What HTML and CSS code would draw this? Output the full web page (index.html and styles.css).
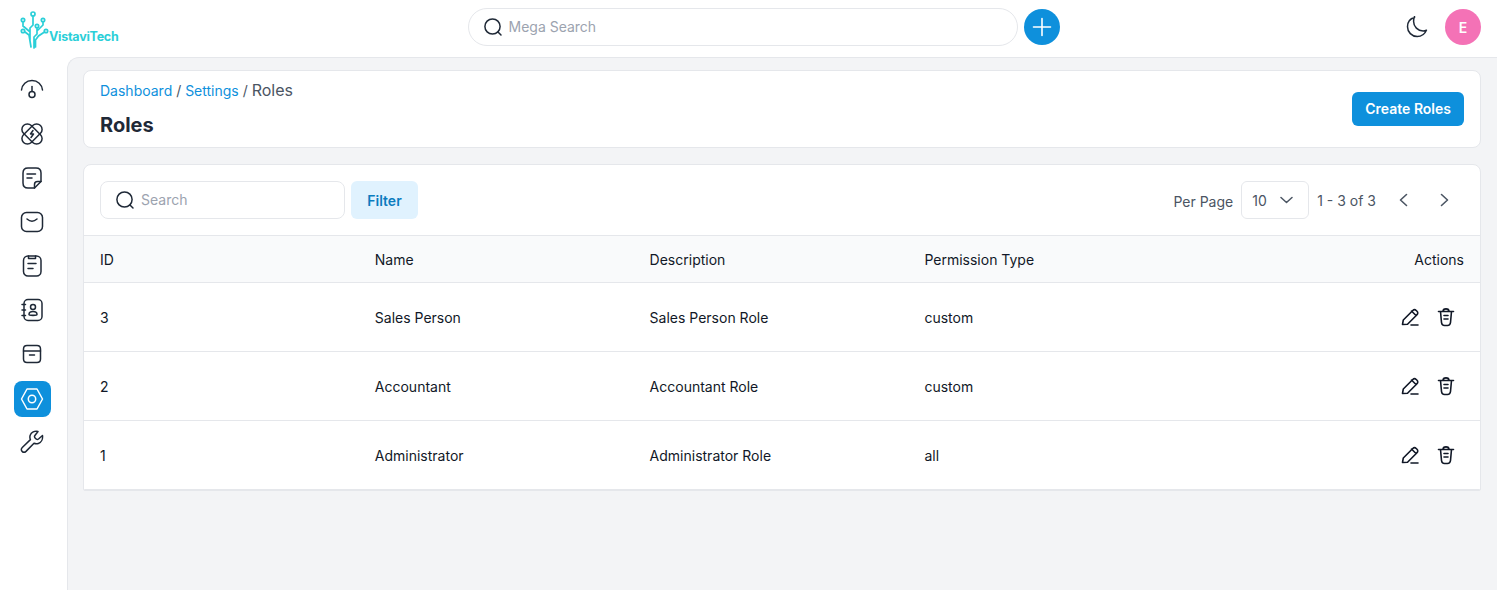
FILE: index.html
```html
<!DOCTYPE html>
<html lang="en">
<head>
<meta charset="utf-8">
<title>Roles</title>
<link rel="stylesheet" href="styles.css">
</head>
<body>
<header class="topbar">
  <div class="logo">
    <svg class="logo-mark" width="32" height="38" viewBox="0 0 32 38" fill="none" stroke="#2bcfd8" stroke-width="1.700" stroke-linecap="round">
      <circle cx="13" cy="3" r="2"/><circle cx="3" cy="9" r="1.700"/><circle cx="23" cy="9" r="1.700"/><circle cx="3" cy="20" r="1.700"/><circle cx="26" cy="20" r="1.700"/><circle cx="17" cy="15" r="1.700"/>
      <path d="M13 5v9l-3 3v13M3 11v4l6 5M5 21l4 3 1 6 1 6M17 17v6l-3 3v11M23 11v3l-5 5M24.500 21l-6 4-3 4v7"/>
    </svg>
    <span class="logo-text">VistaviTech</span>
  </div>
  <div class="mega">
    <label class="mega-field">
      <svg width="20" height="20" viewBox="0 0 20 20" fill="none" stroke="#1f2937" stroke-width="1.500" stroke-linecap="round"><circle cx="9.500" cy="9.500" r="7.600"/><path d="M15 15l3 3"/></svg>
      <span class="mega-placeholder">Mega Search</span>
    </label>
    <button class="plus" type="button" aria-label="Add">
      <svg width="20" height="20" viewBox="0 0 20 20" fill="none" stroke="#fff" stroke-width="1.600" stroke-linecap="round"><path d="M10 1.500v17M1.500 10h17"/></svg>
    </button>
  </div>
  <div class="top-right">
    <svg class="moon" width="22" height="22" viewBox="0 0 22 22" fill="none" stroke="#1f2937" stroke-width="1.500" stroke-linejoin="round"><path d="M8.500 1.500C4.200 2.600 1.500 6.400 1.500 10.800c0 5.300 4.300 9.700 9.700 9.700 4 0 7.600-2.400 9.200-6.200-1 .4-2.100.6-3.300.6-5.300 0-9.500-4.300-9.500-9.500 0-1.800.2-3.200.9-4.900z"/></svg>
    <div class="avatar">E</div>
  </div>
</header>

<div class="shell">
  <nav class="sidebar">
    <a class="nav-item"><svg viewBox="0 0 24 24"><path d="M1.500 12C2 6.500 6.300 2.500 12 2.500S22 6.500 22.500 12"/><path d="M12 8.500v5"/><circle cx="12" cy="16.500" r="3"/></svg></a>
    <a class="nav-item"><svg viewBox="0 0 24 24"><rect x="0" y="6.500" width="24" height="11" rx="5.500" transform="rotate(45 12 12)"/><rect x="0" y="6.500" width="24" height="11" rx="5.500" transform="rotate(-45 12 12)"/><path d="M13 8.500l-2.500 3.500h3L11 15.500"/></svg></a>
    <a class="nav-item"><svg viewBox="0 0 24 24"><path d="M14.500 22H8c-3 0-5-2-5-5V7c0-3 2-5 5-5h8c3 0 5 2 5 5v8.500z"/><path d="M21 15.500h-3.500c-2 0-3 1-3 3V22"/><path d="M7 8h8.500M7 12h5"/></svg></a>
    <a class="nav-item"><svg viewBox="0 0 24 24"><rect x="1.500" y="2.500" width="21" height="19" rx="5"/><path d="M7 9c3 2.600 7 2.600 10 0"/></svg></a>
    <a class="nav-item"><svg viewBox="0 0 24 24"><rect x="3.500" y="2" width="17.500" height="20" rx="4.500"/><path d="M8.500 2v2.500h7V2M8 9.500h8M8 14.500h5"/></svg></a>
    <a class="nav-item"><svg viewBox="0 0 24 24"><rect x="4" y="1.500" width="18" height="21" rx="4"/><path d="M2 6.500h3.500M2 12h3.500M2 17.500h3.500"/><circle cx="13" cy="9" r="2.500"/><path d="M9 16.500c0-1.800 1.800-3 4-3s4 1.200 4 3c0 1.200-8 1.200-8 0z"/></svg></a>
    <a class="nav-item"><svg viewBox="0 0 24 24"><path d="M7 3.500h10c2 0 3.500 1.500 3.500 3.500v10c0 2-1.500 3.500-3.500 3.500H7c-2 0-3.500-1.500-3.500-3.500V7c0-2 1.500-3.500 3.500-3.500z"/><path d="M3.500 9h17M9.500 13h5"/></svg></a>
    <a class="nav-item active"><svg viewBox="0 0 24 24"><path d="M7 2h10l5.500 10L17 22H7L1.500 12z"/><circle cx="12" cy="12" r="3.700"/></svg></a>
    <a class="nav-item"><svg viewBox="0 0 24 24"><path d="M22.500 5.500L18.500 9c-1 .7-2.200.3-3-.5-.9-.9-1.300-2.100-.6-3L18 1.500c-3.500-.8-6.800.9-7.800 3.800-.5 1.500-.4 3 .2 4.300L2.300 17.500c-1.300 1.300-1.300 2.800-.2 3.900 1.200 1.200 2.700 1.100 3.900 0l8-8.100c1.300.6 2.800.7 4.300.2 3-1 4.700-4.400 4.200-8z"/></svg></a>
  </nav>

  <main class="content">
    <section class="card page-head">
      <div>
        <div class="crumbs"><span class="crumb-link">Dashboard</span> <span class="crumb-sep">/</span> <span class="crumb-link">Settings</span> <span class="crumb-sep">/</span> <span class="crumb-now">Roles</span></div>
        <h1>Roles</h1>
      </div>
      <button class="primary" type="button">Create Roles</button>
    </section>

    <section class="card list">
      <div class="toolbar">
        <label class="search">
          <svg width="20" height="20" viewBox="0 0 20 20" fill="none" stroke="#1f2937" stroke-width="1.500" stroke-linecap="round"><circle cx="9.500" cy="9.500" r="7.600"/><path d="M15 15l3 3"/></svg>
          <span class="search-placeholder">Search</span>
        </label>
        <button class="filter" type="button">Filter</button>
        <div class="pager">
          <span class="per-page">Per Page</span>
          <div class="select"><span>10</span>
            <svg width="13" height="8" viewBox="0 0 13 8" fill="none" stroke="#4b5563" stroke-width="1.500" stroke-linecap="round" stroke-linejoin="round"><path d="M1 1.500l5.500 5 5.500-5"/></svg>
          </div>
          <span class="range">1 - 3 of 3</span>
          <button class="page-btn" type="button" aria-label="Previous"><svg width="9" height="14" viewBox="0 0 9 14" fill="none" stroke="#4b5563" stroke-width="1.600" stroke-linecap="round" stroke-linejoin="round"><path d="M7.500 1.500L1.500 7l6 5.500"/></svg></button>
          <button class="page-btn" type="button" aria-label="Next"><svg width="9" height="14" viewBox="0 0 9 14" fill="none" stroke="#4b5563" stroke-width="1.600" stroke-linecap="round" stroke-linejoin="round"><path d="M1.500 1.500L7.500 7l-6 5.500"/></svg></button>
        </div>
      </div>
      <table>
        <thead>
          <tr><th>ID</th><th>Name</th><th>Description</th><th>Permission Type</th><th class="right">Actions</th></tr>
        </thead>
        <tbody>
          <tr><td>3</td><td>Sales Person</td><td>Sales Person Role</td><td>custom</td>
            <td class="right"><span class="actions">
              <svg width="20" height="20" viewBox="0 0 20 20" class="act"><path d="M11.500 4l4.500 4.500M2.500 17.500l.8-4.500 9.500-9.500c1-1 2.400-1 3.400 0l.8.800c1 1 1 2.400 0 3.400l-9.500 9.500zM11 18h7"/></svg>
              <svg width="20" height="20" viewBox="0 0 20 20" class="act"><path d="M2.500 4.500h15M7 4.500c0-3.500 6-3.500 6 0M4.500 4.500l1 11c.2 1.800 1.200 3 3 3h3c1.800 0 2.800-1.200 3-3l1-11M8 8.500h4M8 12h4"/></svg>
            </span></td></tr>
          <tr><td>2</td><td>Accountant</td><td>Accountant Role</td><td>custom</td>
            <td class="right"><span class="actions">
              <svg width="20" height="20" viewBox="0 0 20 20" class="act"><path d="M11.500 4l4.500 4.500M2.500 17.500l.8-4.500 9.500-9.500c1-1 2.400-1 3.400 0l.8.800c1 1 1 2.400 0 3.400l-9.500 9.500zM11 18h7"/></svg>
              <svg width="20" height="20" viewBox="0 0 20 20" class="act"><path d="M2.500 4.500h15M7 4.500c0-3.500 6-3.500 6 0M4.500 4.500l1 11c.2 1.800 1.200 3 3 3h3c1.800 0 2.800-1.200 3-3l1-11M8 8.500h4M8 12h4"/></svg>
            </span></td></tr>
          <tr><td>1</td><td>Administrator</td><td>Administrator Role</td><td>all</td>
            <td class="right"><span class="actions">
              <svg width="20" height="20" viewBox="0 0 20 20" class="act"><path d="M11.500 4l4.500 4.500M2.500 17.500l.8-4.500 9.500-9.500c1-1 2.400-1 3.400 0l.8.800c1 1 1 2.400 0 3.400l-9.500 9.500zM11 18h7"/></svg>
              <svg width="20" height="20" viewBox="0 0 20 20" class="act"><path d="M2.500 4.500h15M7 4.500c0-3.500 6-3.500 6 0M4.500 4.500l1 11c.2 1.800 1.200 3 3 3h3c1.800 0 2.800-1.200 3-3l1-11M8 8.500h4M8 12h4"/></svg>
            </span></td></tr>
        </tbody>
      </table>
    </section>
  </main>
</div>
</body>
</html>
```
FILE: styles.css
```css
* { box-sizing: border-box; }
html, body { margin: 0; height: 100%; overflow: hidden; }
body { background: #fff; font-family: Inter, "Liberation Sans", sans-serif; font-size: 14px; color: #111827; display: flex; flex-direction: column; }
button { font-family: inherit; border: 0; cursor: pointer; }

.topbar { height: 57px; flex: none; display: grid; grid-template-columns: 1fr 592px 1fr; align-items: center; padding: 0 16px 3px 20px; }
.logo { display: flex; align-items: flex-start; height: 38px; position: relative; top: 3px; }
.logo-mark { flex: none; margin-right: -3px; }
.logo-text { font-size: 12.500px; font-weight: 700; color: #2bcfd8; letter-spacing: -.25px; line-height: 15px; margin-top: 18px; }
.mega { display: flex; align-items: center; gap: 6px; transform: translateX(13px); }
.mega-field { width: 550px; height: 38px; border: 1px solid #e5e7eb; border-radius: 19px; display: flex; align-items: center; padding-left: 14px; gap: 6px; }
.mega-placeholder { color: #9ca3af; font-size: 14px; padding-bottom: 2px; }
.plus { width: 36px; height: 36px; border-radius: 50%; background: #0e90dc; display: flex; align-items: center; justify-content: center; padding: 0; }
.top-right { display: flex; justify-content: flex-end; align-items: center; gap: 17px; }
.avatar { width: 36px; height: 36px; border-radius: 50%; background: #f472b6; color: #fff; font-weight: 600; font-size: 14px; display: flex; align-items: center; justify-content: center; }

.shell { flex: 1; display: flex; min-height: 0; }
.sidebar { width: 67px; flex: none; display: flex; flex-direction: column; align-items: center; padding-top: 14px; gap: 6px; padding-right: 3px; }
.nav-item { width: 37px; height: 38px; border-radius: 8px; display: flex; align-items: center; justify-content: center; }
.nav-item svg { width: 24px; height: 24px; fill: none; stroke: #1f2937; stroke-width: 1.500; stroke-linecap: round; stroke-linejoin: round; }
.nav-item.active { background: #0e90dc; height: 36px; margin-top: 2px; }
.nav-item.active svg { stroke: #fff; }

.content { flex: 1; min-width: 0; background: #f3f4f6; border-top: 1px solid #e5e7eb; border-left: 1px solid #e5e7eb; border-top-left-radius: 12px; padding: 12px 16px 0 15px; display: flex; flex-direction: column; gap: 16px; }
.card { background: #fff; border: 1px solid #e5e7eb; border-radius: 8px; }
.page-head { height: 78px; padding: 0 16px; display: flex; align-items: center; justify-content: space-between; }
.crumbs { font-size: 14px; line-height: 20px; margin-top: -1px; color: #4b5563; }
.crumb-link { color: #0e90dc; }
.crumb-sep { color: #4b5563; }
.crumb-now { color: #4b5563; font-size: 16px; }
h1 { margin: 12px 0 0; font-size: 20px; line-height: 24px; font-weight: 700; color: #1f2937; }
.primary { background: #0e90dc; color: #fff; height: 34px; padding: 0 13px 1px; border-radius: 6px; font-size: 14px; font-weight: 600; }

.list { overflow: hidden; border-radius: 8px 8px 2px 2px; }
.toolbar { height: 71px; padding: 0 15px 0 16px; display: flex; align-items: center; gap: 6px; border-bottom: 1px solid #e5e7eb; }
.search { width: 245px; height: 38px; border: 1px solid #e5e7eb; border-radius: 8px; display: flex; align-items: center; gap: 6px; padding-left: 14px; }
.search-placeholder { color: #9ca3af; font-size: 14px; padding-bottom: 2px; }
.filter { width: 67px; height: 38px; background: #e0f2fe; color: #0b7cbf; border-radius: 6px; font-size: 14px; font-weight: 600; }
.pager { margin-left: auto; display: flex; align-items: center; color: #4b5563; font-size: 14px; }
.per-page { margin-left: -1px; padding-top: 2px; }
.select { width: 68px; height: 38px; margin-left: 8px; border: 1px solid #e5e7eb; border-radius: 6px; display: flex; align-items: center; justify-content: space-between; padding: 0 15px 0 10px; }
.range { margin-left: 8px; }
.page-btn { width: 41px; height: 34px; background: none; display: flex; align-items: center; justify-content: center; padding: 0; }
.range + .page-btn { margin-left: 7px; }

table { width: 100%; border-collapse: collapse; table-layout: fixed; }
th { height: 46px; background: #f9fafb; font-weight: 400; text-align: left; padding: 2px 16px 0; font-size: 14px; color: #111827; border-bottom: 1px solid #e5e7eb; }
th:nth-child(-n+4) { width: 274.800px; }
td { height: 69px; padding: 2px 16px 0; font-size: 14px; color: #111827; border-bottom: 1px solid #e5e7eb; }
.right { text-align: right; }
.actions { display: inline-flex; gap: 16px; vertical-align: middle; margin-right: 8px; margin-top: -3px; }
.act { fill: none; stroke: #111827; stroke-width: 1.600; stroke-linecap: round; stroke-linejoin: round; }
```
